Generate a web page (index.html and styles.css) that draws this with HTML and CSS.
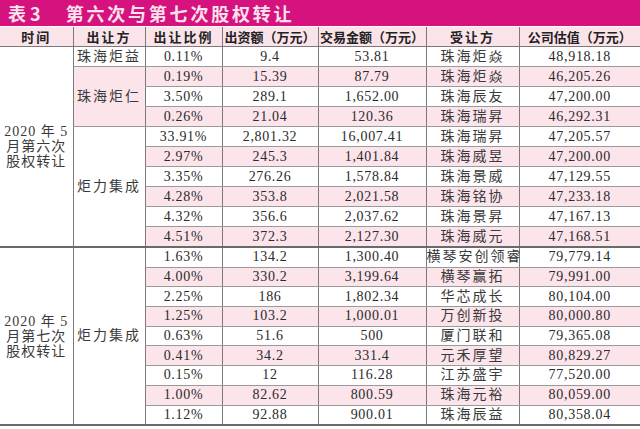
FILE: index.html
```html
<!DOCTYPE html>
<html lang="zh">
<head>
<meta charset="utf-8">
<title>表3 第六次与第七次股权转让</title>
<link rel="stylesheet" href="styles.css">
</head>
<body>
<div class="title"><span class="tno">表3</span><span class="tname">第六次与第七次股权转让</span></div>
<table class="tbl">
  <colgroup>
    <col class="c1"><col class="c2"><col class="c3"><col class="c4"><col class="c5"><col class="c6"><col class="c7">
  </colgroup>
  <thead>
    <tr>
      <th class="sp">时间</th><th class="sp">出让方</th><th class="sp">出让比例</th><th>出资额（万元）</th><th>交易金额（万元）</th><th class="sp">受让方</th><th>公司估值（万元）</th>
    </tr>
  </thead>
  <tbody>
    <tr><td class="time" rowspan="10">2020 年 5<br>月第六次<br>股权转让</td><td class="cn">珠海炬益</td><td>0.11%</td><td>9.4</td><td>53.81</td><td class="cn">珠海炬焱</td><td>48,918.18</td></tr>
    <tr class="p"><td class="cn pinkcell" rowspan="3">珠海炬仁</td><td>0.19%</td><td>15.39</td><td>87.79</td><td class="cn">珠海炬焱</td><td>46,205.26</td></tr>
    <tr><td>3.50%</td><td>289.1</td><td>1,652.00</td><td class="cn">珠海辰友</td><td>47,200.00</td></tr>
    <tr class="p"><td>0.26%</td><td>21.04</td><td>120.36</td><td class="cn">珠海瑞昇</td><td>46,292.31</td></tr>
    <tr><td class="cn white" rowspan="6">炬力集成</td><td>33.91%</td><td>2,801.32</td><td>16,007.41</td><td class="cn">珠海瑞昇</td><td>47,205.57</td></tr>
    <tr class="p"><td>2.97%</td><td>245.3</td><td>1,401.84</td><td class="cn">珠海威昱</td><td>47,200.00</td></tr>
    <tr><td>3.35%</td><td>276.26</td><td>1,578.84</td><td class="cn">珠海景威</td><td>47,129.55</td></tr>
    <tr class="p"><td>4.28%</td><td>353.8</td><td>2,021.58</td><td class="cn">珠海铭协</td><td>47,233.18</td></tr>
    <tr><td>4.32%</td><td>356.6</td><td>2,037.62</td><td class="cn">珠海景昇</td><td>47,167.13</td></tr>
    <tr class="p"><td>4.51%</td><td>372.3</td><td>2,127.30</td><td class="cn">珠海威元</td><td>47,168.51</td></tr>

    <tr class="g2 first"><td class="time" rowspan="9">2020 年 5<br>月第七次<br>股权转让</td><td class="cn white" rowspan="9">炬力集成</td><td>1.63%</td><td>134.2</td><td>1,300.40</td><td class="cn">横琴安创领睿</td><td>79,779.14</td></tr>
    <tr class="g2 p"><td>4.00%</td><td>330.2</td><td>3,199.64</td><td class="cn">横琴赢拓</td><td>79,991.00</td></tr>
    <tr class="g2"><td>2.25%</td><td>186</td><td>1,802.34</td><td class="cn">华芯成长</td><td>80,104.00</td></tr>
    <tr class="g2 p"><td>1.25%</td><td>103.2</td><td>1,000.01</td><td class="cn">万创新投</td><td>80,000.80</td></tr>
    <tr class="g2"><td>0.63%</td><td>51.6</td><td>500</td><td class="cn">厦门联和</td><td>79,365.08</td></tr>
    <tr class="g2 p"><td>0.41%</td><td>34.2</td><td>331.4</td><td class="cn">元禾厚望</td><td>80,829.27</td></tr>
    <tr class="g2"><td>0.15%</td><td>12</td><td>116.28</td><td class="cn">江苏盛宇</td><td>77,520.00</td></tr>
    <tr class="g2 p"><td>1.00%</td><td>82.62</td><td>800.59</td><td class="cn">珠海元裕</td><td>80,059.00</td></tr>
    <tr class="g2 last"><td>1.12%</td><td>92.88</td><td>900.01</td><td class="cn">珠海辰益</td><td>80,358.04</td></tr>
  </tbody>
</table>
</body>
</html>
```

FILE: styles.css
```css
html, body {
  margin: 0;
  padding: 0;
  background: #ffffff;
}

body {
  width: 640px;
  height: 429px;
  overflow: hidden;
  font-family: "Liberation Serif", "Noto Sans CJK SC", serif;
  color: #2b2b2b;
}

.title {
  height: 26px;
  background: #d5127d;
  color: #fbe1ec;
  font-family: "Noto Sans CJK SC", sans-serif;
  font-weight: bold;
  font-size: 18px;
  line-height: 26px;
  padding-left: 8px;
  margin-bottom: 1px;
  white-space: nowrap;
}

.tno {
  letter-spacing: 4px;
  margin-right: 21px;
}

.tname {
  letter-spacing: 2.8px;
}

.tbl {
  width: 640px;
  border-collapse: collapse;
  table-layout: fixed;
}

.c1 { width: 73px; }
.c2 { width: 72px; }
.c3 { width: 77px; }
.c4 { width: 96px; }
.c5 { width: 108px; }
.c6 { width: 93px; }
.c7 { width: 121px; }

.tbl th {
  height: 19px;
  padding: 0;
  background: #fbe3ea;
  font-family: "Noto Sans CJK SC", sans-serif;
  font-weight: bold;
  font-size: 13px;
  color: #222;
  text-align: center;
  vertical-align: middle;
  border-left: 1px solid #7a7a7a;
  border-bottom: 1px solid #7a7a7a;
  white-space: nowrap;
  line-height: 18px;
}

.tbl th.sp {
  letter-spacing: 2px;
}

.tbl td {
  height: 19px;
  padding: 0;
  font-size: 14px;
  letter-spacing: 0.7px;
  text-align: center;
  vertical-align: middle;
  line-height: 18px;
  border-left: 1px solid #7a7a7a;
  border-bottom: 1px solid #9a9a9a;
  white-space: nowrap;
}

.tbl th:first-child,
.tbl td.time {
  border-left: none;
}

.tbl tr.p td {
  background: #fce4eb;
}

.tbl tr.p td.white,
.tbl td.white {
  background: #ffffff;
}

.tbl td.pinkcell {
  background: #fce4eb;
}

.tbl td.cn {
  letter-spacing: 2px;
  color: #3a3a3a;
}

.tbl td.time {
  background: #ffffff;
  line-height: 15px;
  font-size: 14px;
  letter-spacing: 1px;
  color: #3a3a3a;
  border-bottom: 2px solid #6a6a6a;
}

.tbl tr.first td {
  border-top: 2px solid #6a6a6a;
}

.tbl tr.g2 td {
  height: 18.7px;
}

.tbl tr.last td,
.tbl tr.g2 td.white {
  border-bottom: 2px solid #6a6a6a;
}
```
